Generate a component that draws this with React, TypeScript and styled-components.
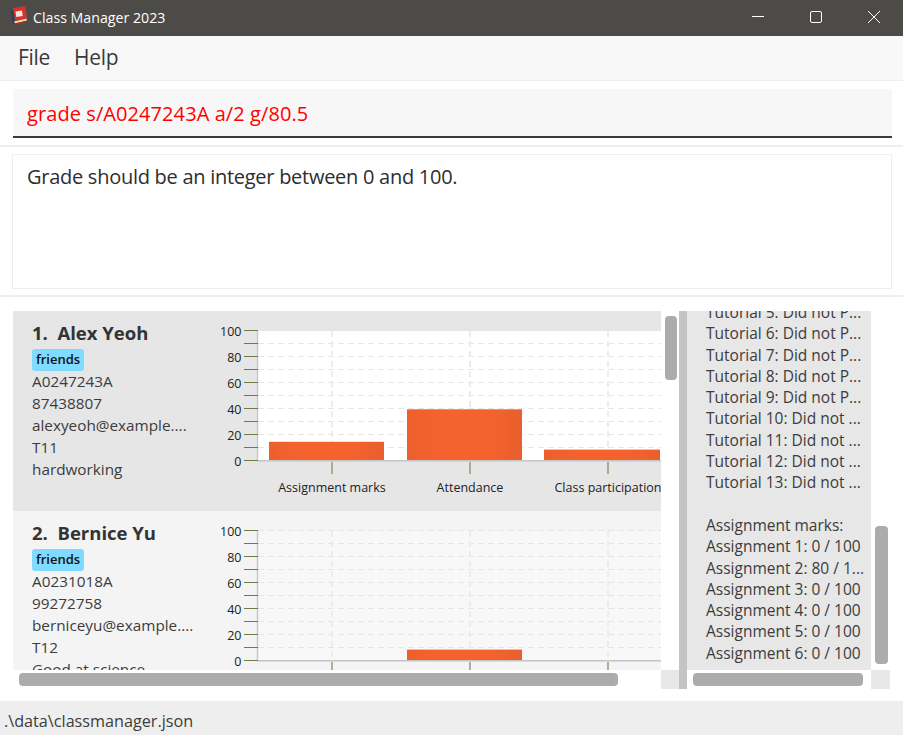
import React from "react"
import styled, { createGlobalStyle } from "styled-components"

const GlobalStyle = createGlobalStyle`
  html, body {
    margin: 0;
    padding: 0;
    background: #fff;
    overflow: hidden;
  }
  * {
    box-sizing: border-box;
  }
`

const font = `"Open Sans", "Noto Sans", "Liberation Sans", sans-serif`

// window frame
const Window = styled.div`
  width: 903px;
  height: 735px;
  display: flex;
  flex-direction: column;
  font-family: ${font};
  color: #333;
  overflow: hidden;
`

const TitleBar = styled.div`
  height: 36px;
  flex: none;
  background: #4d4b48;
  display: flex;
  align-items: center;
  padding-left: 10px;
  color: #fff;
`

const TitleText = styled.span`
  font-size: 14.2px;
  margin-left: 5px;
  padding-bottom: 2px;
  flex: 1;
`

const WinButton = styled.div`
  width: 58px;
  height: 36px;
  padding-bottom: 2px;
  display: flex;
  align-items: center;
  justify-content: center;
`

const MenuBar = styled.div`
  height: 45px;
  flex: none;
  background: #f8f8f8;
  border-bottom: 1px solid #eeeeee;
  display: flex;
  align-items: center;
  padding: 0 0 2px 18px;
  gap: 24px;
`

const MenuItem = styled.span`
  font-size: 21px;
  letter-spacing: -0.3px;
  color: #3a3a3a;
`

const CommandRow = styled.div`
  height: 66px;
  flex: none;
  padding: 8px 11px 7px 13px;
  border-bottom: 2px solid #eeeeee;
  margin-bottom: 7px;
`

const CommandField = styled.div`
  height: 49px;
  background: #f7f7f7;
  border-bottom: 2px solid #3c3c3c;
  padding: 1px 0 0 14px;
  display: flex;
  align-items: center;
  font-size: 20px;
  letter-spacing: 0.08px;
  color: #ff0000;
`

const ResultRow = styled.div`
  height: 135px;
  flex: none;
  margin: 0 11px 0 12px;
  border: 1px solid #eeeeee;
  padding: 8px 14px;
  font-size: 20px;
  letter-spacing: -0.27px;
  color: #2e2e2e;
`

const Divider = styled.div`
  height: 2px;
  flex: none;
  margin: 6px 0 14px;
  background: #eeeeee;
`

const Split = styled.div`
  height: 378px;
  flex: none;
  display: flex;
  padding-left: 13px;
`

// a scroll pane: viewport, vertical track, horizontal track, corner
const ScrollPane = styled.div<{ $width: number; $barHeight: number }>`
  width: ${(p) => p.$width}px;
  flex: none;
  display: grid;
  grid-template-columns: 1fr ${(p) => p.$barHeight}px;
  grid-template-rows: 359px 19px;
`

const Viewport = styled.div<{ $tone?: string }>`
  overflow: hidden;
  background: ${(p) => p.$tone || "transparent"};
`

const VTrack = styled.div`
  padding: 0 2px 0 4px;
`

const VThumb = styled.div<{ $top: number; $height: number }>`
  margin-top: ${(p) => p.$top}px;
  height: ${(p) => p.$height}px;
  background: #acacac;
  border-radius: 4px;
`

const HTrack = styled.div<{ $left: number; $width: number }>`
  padding-top: 3px;
  padding-left: ${(p) => p.$left}px;

  &::before {
    content: "";
    display: block;
    width: ${(p) => p.$width}px;
    height: 13px;
    background: #acacac;
    border-radius: 4px;
  }
`

const Corner = styled.div`
  background: #e8e8e8;
`

const SplitHandle = styled.div`
  width: 8px;
  flex: none;
  background: #c4c4c4;
`

// student card
const Card = styled.div<{ $odd: boolean }>`
  height: 200px;
  display: flex;
  background: ${(p) => (p.$odd ? "#e6e6e6" : "#f4f4f4")};
  padding-left: 19px;
`

const Info = styled.div`
  width: 183px;
  flex: none;
  padding-top: 9px;
`

const Name = styled.div`
  font-size: 18.5px;
  font-weight: 700;
  line-height: 25px;
  white-space: pre;
  color: #333;
  margin-bottom: 4px;
`

const Tag = styled.div`
  width: fit-content;
  height: 22px;
  line-height: 21px;
  padding: 0 4px;
  margin-bottom: -1px;
  background: #7fdbff;
  border-radius: 3px;
  font-size: 13px;
  font-weight: 600;
  color: #111;
`

const Line = styled.div`
  font-size: 15.3px;
  line-height: 22px;
  color: #3c3c3c;
  white-space: nowrap;
`

const ChartSlot = styled.div`
  padding-top: 9px;
`

const ChartBox = styled.svg`
  flex: none;
  display: block;
  font-family: ${font};
`

// right hand panel
const Details = styled.div`
  margin-top: -9px;
  padding-left: 19px;
  font-size: 15.5px;
  line-height: 21.3px;
  color: #3c3c3c;
  white-space: pre;
`

// status bar
const StatusBar = styled.div`
  height: 34px;
  margin-top: 12px;
  flex: none;
  background: #eeeeee;
  padding: 6px 0 0 4px;
  display: flex;
  align-items: center;
  font-size: 16.2px;
  color: #3c3c3c;
`

const AppIcon = () => (
  <svg width="18" height="24" viewBox="0 0 18 24">
    <path d="M1 5 L4 4 L6 18 L3 19 Z" fill="#23405f" />
    <path d="M3 2 L15.5 0 L17 12 L5 15 Z" fill="#d5322c" />
    <path d="M5.5 5.5 L12 4.5 L12.8 10 L6.3 11 Z" fill="#f3e6e0" />
    <path d="M4 15.5 L16.5 12.5 L17 14.5 L5 17.5 Z" fill="#f0d9a8" />
    <path d="M4 17.5 L15.5 15 L15.5 16.5 L5 19 Z" fill="#a8322b" />
  </svg>
)

const ticksY = [0, 1, 2, 3, 4, 5, 6, 7, 8, 9, 10]
const cats = [
  { label: "Assignment marks", x: 117, from: 54, to: 169 },
  { label: "Attendance", x: 255, from: 192, to: 307 },
  { label: "Class participation", x: 393, from: 329, to: 445 },
]

const Chart = ({ id, values, plot }: { id: string; values: number[]; plot: string }) => {
  // svg origin is 215,320 of the first card
  const bottom = 141
  const top = 11
  const step = (bottom - top) / 10
  return (
    <ChartBox width="446" height="190" viewBox="0 0 446 190">
      <defs>
        <linearGradient id={id} x1="0" x2="1" y1="0" y2="0">
          <stop offset="0" stopColor="#ec602d" />
          <stop offset="0.25" stopColor="#f4622e" />
          <stop offset="0.75" stopColor="#f4622e" />
          <stop offset="1" stopColor="#e85f2d" />
        </linearGradient>
      </defs>
      <rect x="43" y={top} width="403" height={bottom - top} fill={plot} />
      {ticksY.map((i) => (
        <line key={i} x1="43" x2="446" y1={top + i * step - 0.5} y2={top + i * step - 0.5} stroke="#e6e6e6" strokeDasharray="6 4" />
      ))}
      {cats.map((c) => (
        <line key={c.x} x1={c.x} x2={c.x} y1={top} y2={bottom} stroke="#ececec" strokeWidth="2" strokeDasharray="6 4" />
      ))}
      {cats.map((c, i) => {
        const h = (values[i] / 100) * (bottom - top)
        if (!h) return null
        return <rect key={c.x} x={c.from} y={bottom - h - 1} width={c.to - c.from} height={h} fill={`url(#${id})`} />
      })}
      <line x1="42.5" x2="42.5" y1={top} y2={bottom} stroke="#c8c8c8" strokeWidth="1.5" />
      <line x1="42" x2="446" y1={bottom - 0.25} y2={bottom - 0.25} stroke="#c4c4c4" strokeWidth="1.5" />
      {ticksY.map((i) => (
        <line key={i} x1="29" x2="43" y1={top + i * step - 0.5} y2={top + i * step - 0.5} stroke="#6f7a45" strokeWidth="1" />
      ))}
      {[0, 20, 40, 60, 80, 100].map((v) => (
        <text key={v} x="26.5" y={bottom - v * 1.3 + 5} textAnchor="end" fontSize="12.5" fill="#222">
          {v}
        </text>
      ))}
      {cats.map((c) => (
        <g key={c.x}>
          <line x1={c.x} x2={c.x} y1={bottom + 1} y2={bottom + 13} stroke="#8f9a78" strokeWidth="1.5" />
          <text x={c.x} y={bottom + 30.5} textAnchor="middle" fontSize="12.5" fill="#222">
            {c.label}
          </text>
        </g>
      ))}
    </ChartBox>
  )
}

const students = [
  {
    no: "1.",
    name: "Alex Yeoh",
    lines: ["A0247243A", "87438807", "alexyeoh@example....", "T11", "hardworking"],
    values: [14, 39, 8],
    plot: "#ffffff",
  },
  {
    no: "2.",
    name: "Bernice Yu",
    lines: ["A0231018A", "99272758", "berniceyu@example....", "T12", "Good at science"],
    values: [0, 8, 0],
    plot: "#f8f8f8",
  },
]

const detailLines = [
  "Tutorial 5: Did not P...",
  "Tutorial 6: Did not P...",
  "Tutorial 7: Did not P...",
  "Tutorial 8: Did not P...",
  "Tutorial 9: Did not P...",
  "Tutorial 10: Did not ...",
  "Tutorial 11: Did not ...",
  "Tutorial 12: Did not ...",
  "Tutorial 13: Did not ...",
  " ",
  "Assignment marks:",
  "Assignment 1: 0 / 100",
  "Assignment 2: 80 / 1...",
  "Assignment 3: 0 / 100",
  "Assignment 4: 0 / 100",
  "Assignment 5: 0 / 100",
  "Assignment 6: 0 / 100",
]

const App = () => {
  return (
    <Window>
      <GlobalStyle />
      <TitleBar>
        <AppIcon />
        <TitleText>Class Manager 2023</TitleText>
        <WinButton>
          <svg width="12" height="12" viewBox="0 0 12 12">
            <line x1="0" x2="12" y1="5.5" y2="5.5" stroke="#fff" />
          </svg>
        </WinButton>
        <WinButton>
          <svg width="12" height="12" viewBox="0 0 12 12">
            <rect x="0.5" y="0.5" width="11" height="11" rx="1.5" fill="none" stroke="#fff" />
          </svg>
        </WinButton>
        <WinButton>
          <svg width="12" height="12" viewBox="0 0 12 12">
            <path d="M0 0 L12 12 M12 0 L0 12" stroke="#fff" />
          </svg>
        </WinButton>
      </TitleBar>
      <MenuBar>
        <MenuItem>File</MenuItem>
        <MenuItem>Help</MenuItem>
      </MenuBar>
      <CommandRow>
        <CommandField>grade s/A0247243A a/2 g/80.5</CommandField>
      </CommandRow>
      <ResultRow>Grade should be an integer between 0 and 100.</ResultRow>
      <Divider />
      <Split>
        <ScrollPane $width={666} $barHeight={18}>
          <Viewport>
            {students.map((s, i) => (
              <Card key={s.no} $odd={i % 2 === 0}>
                <Info>
                  <Name>{`${s.no}  ${s.name}`}</Name>
                  <Tag>friends</Tag>
                  {s.lines.map((l) => (
                    <Line key={l}>{l}</Line>
                  ))}
                </Info>
                <ChartSlot>
                  <Chart id={`bar${i}`} values={s.values} plot={s.plot} />
                </ChartSlot>
              </Card>
            ))}
          </Viewport>
          <VTrack>
            <VThumb $top={5} $height={64} />
          </VTrack>
          <HTrack $left={6} $width={599} />
          <Corner />
        </ScrollPane>
        <SplitHandle />
        <ScrollPane $width={203} $barHeight={19}>
          <Viewport $tone="#e7e7e7">
            <Details>
              {detailLines.map((l, i) => (
                <div key={i}>{l}</div>
              ))}
            </Details>
          </Viewport>
          <VTrack>
            <VThumb $top={215} $height={138} />
          </VTrack>
          <HTrack $left={6} $width={170} />
          <Corner />
        </ScrollPane>
      </Split>
      <StatusBar>.\data\classmanager.json</StatusBar>
    </Window>
  )
}

export default App
